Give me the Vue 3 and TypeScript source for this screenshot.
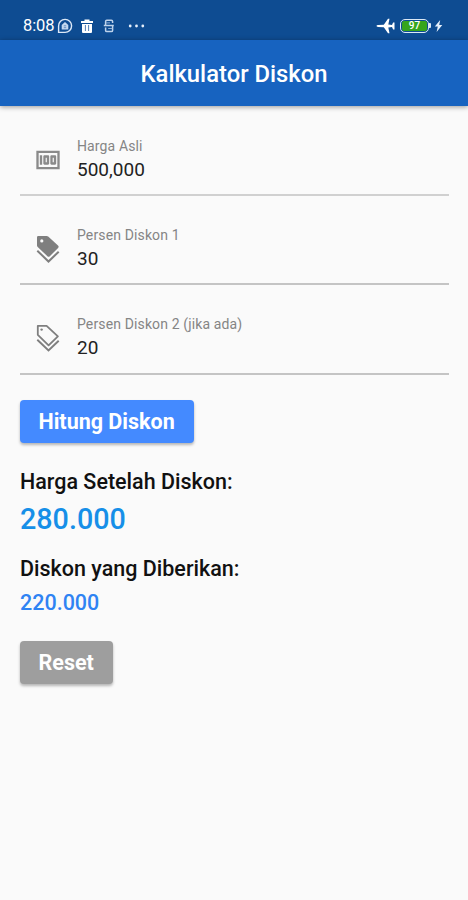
<script setup lang="ts">
import { computed, ref } from 'vue'

type IconName = 'money' | 'tag' | 'tag-outline'

interface Field {
  id: string
  label: string
  icon: IconName
  value: string
}

const fields = ref<Field[]>([
  { id: 'price', label: 'Harga Asli', icon: 'money', value: '500,000' },
  { id: 'first', label: 'Persen Diskon 1', icon: 'tag', value: '30' },
  { id: 'second', label: 'Persen Diskon 2 (jika ada)', icon: 'tag-outline', value: '20' },
])

const toNumber = (text: string): number => Number(text.replace(/,/g, '')) || 0
const group = (n: number): string => String(Math.round(n)).replace(/\B(?=(\d{3})+$)/g, '.')

function compute(): number {
  const [price, first, second] = fields.value.map((f) => toNumber(f.value))
  return (price * (100 - first) * (100 - second)) / 10000
}

const original = ref(toNumber(fields.value[0].value))
const finalPrice = ref(compute())
const finalText = computed(() => group(finalPrice.value))
const savedText = computed(() => group(original.value - finalPrice.value))

function calculate(): void {
  original.value = toNumber(fields.value[0].value)
  finalPrice.value = compute()
}

function reset(): void {
  fields.value.forEach((f) => (f.value = ''))
  calculate()
}
</script>

<template>
  <div class="screen">
    <div class="status">
      <span class="clock">8:08</span>
      <svg class="st-chat" viewBox="0 0 16 16" width="16" height="16">
        <path d="M1.6 14.4V8a6.5 6.5 0 1 1 6.5 6.4z" fill="none" stroke="#dce8f7" stroke-width="1.4" />
        <path d="M4.7 7l3.3-3L11.3 7v4.5H4.7z" fill="#c4d8f0" />
        <path d="M6.8 7.8h2.4M6.8 9.7h2.4" stroke="#4a7ab3" stroke-width=".8" />
      </svg>
      <svg class="st-trash" viewBox="0 0 14 16" width="14" height="16">
        <path d="M1 3h3.5V1.5h5V3H13v2H1zM2 6h10v8q0 1-1 1H3q-1 0-1-1z" fill="#fff" />
        <path d="M5.4 7v6M8.6 7v6" stroke="#547fb4" stroke-width="1" />
      </svg>
      <svg class="st-s" viewBox="0 0 12 16" width="12" height="16">
        <path d="M9.6 5V3.4q0-1.2-1.2-1.2H3.8q-1.2 0-1.2 1.2v4h7v5q0 1.2-1.2 1.2H3.8q-1.2 0-1.2-1.2V9.6M.8 7.4h10" fill="none" stroke="#bdd2eb" stroke-width="1.5" />
        <path d="M3 4.9h4M5.2 10.5h4" stroke="#8fb0d8" stroke-width="1" />
      </svg>
      <svg class="st-dots" viewBox="0 0 18 4" width="18" height="4">
        <circle cx="2.2" cy="2" r="1.4" /><circle cx="8.5" cy="2" r="1.4" /><circle cx="14.8" cy="2" r="1.4" />
      </svg>
      <span class="spacer"></span>
      <svg class="st-plane" viewBox="0 0 19 16" width="19" height="16">
        <path d="M.5 8q0-.8 1.5-.9l5.8-.4L12 .8h1.5l-1.2 5.8 3.7.3 1.1-2.5h1.4v7.2h-1.4L16 9.1l-3.7.3 1.2 5.8H12L7.8 9.3 2 8.9Q.5 8.8.5 8z" fill="#fff" />
      </svg>
      <span class="battery"><span class="level">97</span></span>
      <svg class="st-bolt" viewBox="0 0 9 14" width="9" height="14">
        <path d="M6.2 1L.8 7.6h3L2.6 13l5.7-7H5.2z" fill="#e6f0fb" />
      </svg>
    </div>

    <header class="appbar"><h1>Kalkulator Diskon</h1></header>

    <main class="content">
      <label v-for="f in fields" :key="f.id" class="field">
        <svg v-if="f.icon === 'money'" class="icon" viewBox="0 0 24 24">
          <path fill="#8a8a8a" d="M5 8h2v8H5zM12 8H9c-.55 0-1 .45-1 1v6c0 .55.45 1 1 1h3c.55 0 1-.45 1-1V9c0-.55-.45-1-1-1zm-1 6h-1v-4h1v4zM18 8h-3c-.55 0-1 .45-1 1v6c0 .55.45 1 1 1h3c.55 0 1-.45 1-1V9c0-.55-.45-1-1-1zm-1 6h-1v-4h1v4zM2 4v16h20V4H2zm2 14V6h16v12H4z" />
        </svg>
        <svg v-else-if="f.icon === 'tag'" class="icon" viewBox="0 0 28 28">
          <path fill="#7f7f7f" fill-rule="evenodd" d="M3 2.2Q3 .9 4.3.9h8.4q.8 0 1.5.6l9.8 9.1q1.3 1.2.1 2.4l-8.3 8.2q-1.2 1.1-2.4 0L3.7 12q-.7-.7-.7-1.6zM6.2 5.9a1.6 1.6 0 1 0 3.2 0a1.6 1.6 0 1 0-3.2 0z" />
          <path fill="none" stroke="#7f7f7f" stroke-width="2" d="M3.3 15.7l11.2 10.8 10.2-9.8" />
        </svg>
        <svg v-else class="icon" viewBox="0 0 28 28">
          <path fill="none" stroke="#7f7f7f" stroke-width="1.8" stroke-linejoin="round" d="M3.8 1.8h8.8l11.3 10.5-9.3 9L3.8 10.8z" />
          <circle cx="7.6" cy="5.6" r="1.2" fill="#7f7f7f" />
          <path fill="none" stroke="#7f7f7f" stroke-width="1.9" d="M3.3 15.7l11.2 10.8 10.2-9.8" />
        </svg>
        <span class="texts">
          <span class="label">{{ f.label }}</span>
          <input v-model="f.value" class="value" type="text" inputmode="numeric" />
        </span>
      </label>

      <button class="btn primary" type="button" @click="calculate">Hitung Diskon</button>
      <p class="caption">Harga Setelah Diskon:</p>
      <p class="final">{{ finalText }}</p>
      <p class="caption second">Diskon yang Diberikan:</p>
      <p class="saved">{{ savedText }}</p>
      <button class="btn grey" type="button" @click="reset">Reset</button>
    </main>
  </div>
</template>

<style>
body {
  background: #fafafa;
}
</style>

<style scoped>
.screen {
  min-height: 900px;
  box-sizing: border-box;
  background: #fafafa;
  font-family: Roboto, sans-serif;
  color: #111;
}
.status {
  display: flex;
  align-items: center;
  height: 40px;
  box-sizing: border-box;
  padding: 12px 25px 0 23px;
  background: #0e4c92;
  color: #fff;
}
.clock {
  width: 34px;
  font-size: 16.5px;
  line-height: 20px;
  letter-spacing: -0.1px;
}
.st-trash {
  margin-left: 7px;
}
.st-s {
  margin-left: 9px;
}
.st-dots {
  margin-left: 13px;
  fill: #e6effa;
}
.spacer {
  flex: 1;
}
.battery {
  position: relative;
  display: flex;
  width: 29px;
  height: 14px;
  margin-left: 5px;
  padding: 1px;
  box-sizing: border-box;
  border: 1.5px solid #dce9f5;
  border-radius: 5px;
}
.battery::after {
  content: '';
  position: absolute;
  right: -3px;
  top: 3px;
  width: 2px;
  height: 5px;
  background: #dce9f5;
  border-radius: 0 1px 1px 0;
}
.level {
  flex: 1;
  background: #36a51c;
  border-radius: 2px;
  font-size: 10px;
  font-weight: 500;
  line-height: 10px;
  text-align: center;
}
.st-bolt {
  margin-left: 5px;
}
.appbar {
  position: relative;
  display: flex;
  align-items: center;
  justify-content: center;
  height: 66px;
  background: #1763c0;
  box-shadow: 0 1px 5px rgba(0, 0, 0, 0.4);
}
h1 {
  margin: 2px 0 0;
  font-size: 23.8px;
  font-weight: 500;
  line-height: 28px;
  color: #fff;
}
.content {
  display: flex;
  flex-direction: column;
  align-items: flex-start;
  padding: 0 19px 0 20px;
}
.field {
  display: flex;
  align-items: flex-start;
  width: 100%;
  height: 89.3px;
  box-sizing: border-box;
  padding: 38.7px 0 0 14px;
  border-bottom: 2px solid #c4c4c4;
}
.field:first-child {
  height: 90px;
  padding-top: 40px;
  border-bottom-color: #d0d0d0;
}
.icon {
  width: 28px;
  height: 28px;
}
.texts {
  display: flex;
  flex-direction: column;
  margin: -8.5px 0 0 15px;
}
.field:first-child .texts {
  margin-top: -9px;
}
.label {
  font-size: 14px;
  line-height: 18px;
  letter-spacing: 0.13px;
  color: #858585;
}
.value {
  width: 330px;
  height: 24px;
  margin-top: 3px;
  padding: 0;
  border: 0;
  outline: 0;
  background: none;
  font-family: inherit;
  font-size: 19px;
  line-height: 24px;
  color: #222;
}
.btn {
  height: 43px;
  padding: 0 19.5px 0 18.5px;
  border: 0;
  border-radius: 4px;
  box-shadow: 0 2px 3px rgba(0, 0, 0, 0.28);
  font-family: inherit;
  font-size: 21.5px;
  font-weight: 700;
  line-height: 43px;
  color: #fff;
}
.primary {
  margin-top: 25px;
  background: #448aff;
}
.grey {
  margin-top: 22.5px;
  background: #9e9e9e;
}
p {
  margin: 0;
  font-weight: 500;
}
.caption {
  margin-top: 24px;
  font-size: 21.5px;
  line-height: 30px;
}
.caption.second {
  margin-top: 16px;
}
.final {
  margin-top: 3px;
  font-size: 28.7px;
  line-height: 38px;
  color: #168fe8;
}
.saved {
  margin-top: 4.5px;
  font-size: 21.5px;
  line-height: 30px;
  color: #2f83f3;
}
</style>
